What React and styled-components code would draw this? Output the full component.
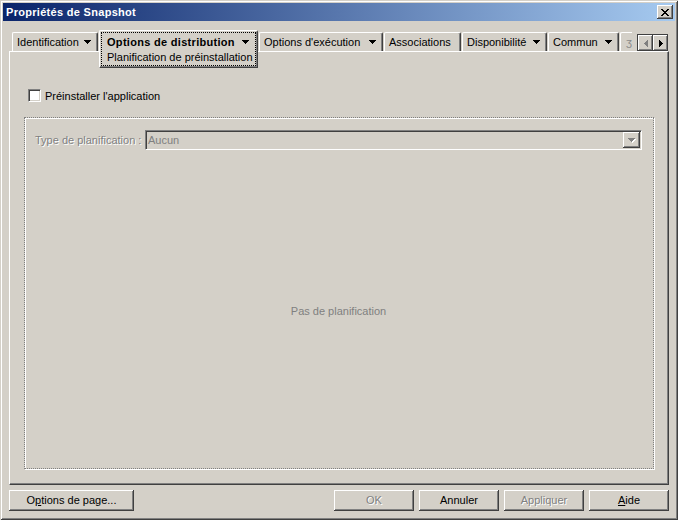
import React from 'react';
import styled, { createGlobalStyle } from 'styled-components';

const Global = createGlobalStyle`
  html, body { margin: 0; padding: 0; background: #d4d0c8; }
  body { font-family: "Liberation Sans", Arial, sans-serif; font-size: 11px; color: #000; }
  #root { width: 678px; height: 520px; }
  * { box-sizing: border-box; }
`;

const Window = styled.div`
  width: 678px;
  height: 520px;
  background: #d4d0c8;
  padding: 3px;
  display: flex;
  flex-direction: column;
  box-shadow: inset 1px 1px 0 #d4d0c8, inset -1px -1px 0 #404040,
    inset 2px 2px 0 #fff, inset -2px -2px 0 #808080;
`;

const TitleBar = styled.div`
  height: 18px;
  flex: none;
  display: flex;
  align-items: center;
  justify-content: space-between;
  padding: 0 2px 0 3px;
  background: linear-gradient(to right, #0a246a, #a6caf0);
`;

const Title = styled.span`
  color: #fff;
  font-weight: bold;
  font-size: 11px;
  letter-spacing: 0.3px;
`;

const CloseButton = styled.div`
  width: 16px;
  height: 14px;
  background: #d4d0c8;
  display: flex;
  align-items: center;
  justify-content: center;
  box-shadow: inset -1px -1px 0 #404040, inset 1px 1px 0 #fff, inset -2px -2px 0 #808080;
`;

const Content = styled.div`
  flex: 1;
  display: flex;
  flex-direction: column;
  padding: 0 6px;
`;

const TabRow = styled.div`
  height: 21px;
  margin-top: 9px;
  padding-left: 3px;
  display: flex;
  align-items: flex-start;
  gap: 1px;
  position: relative;
  z-index: 2;
`;

const Tab = styled.div`
  width: ${p => p.$w}px;
  height: 19px;
  margin-top: 2px;
  flex: none;
  display: flex;
  align-items: center;
  justify-content: space-between;
  padding: 0 6px 1px 4px;
  border-top: 1px solid #fff;
  border-left: 1px solid #fff;
  border-right: 1px solid #404040;
  border-radius: 2px 2px 0 0;
  box-shadow: inset -1px 0 0 #808080;
  white-space: nowrap;
`;

const ActiveTab = styled.div`
  width: ${p => p.$w}px;
  height: 38px;
  flex: none;
  padding: 1px;
  background: #d4d0c8;
  border-top: 1px solid #fff;
  border-left: 1px solid #fff;
  border-right: 1px solid #404040;
  border-bottom: 1px solid #404040;
  border-radius: 2px 2px 0 0;
  box-shadow: inset -1px -1px 0 #808080;
`;

const FocusRect = styled.div`
  height: 34px;
  border: 1px dotted #000;
  display: flex;
  flex-direction: column;
  padding: 1px 6px 0 5px;
`;

const TabLine = styled.div`
  height: 15px;
  display: flex;
  align-items: center;
  justify-content: space-between;
  font-weight: ${p => (p.$bold ? 'bold' : 'normal')};
  letter-spacing: ${p => (p.$bold ? '0.3px' : '0')};
  white-space: nowrap;
`;

const PartialClip = styled.div`
  width: 12px;
  height: 19px;
  margin-top: 2px;
  overflow: hidden;
  flex: none;
`;

const PartialTab = styled.div`
  width: 60px;
  height: 19px;
  border-top: 1px solid #fff;
  border-left: 1px solid #fff;
  border-radius: 2px 2px 0 0;
  padding: 0 0 1px 5px;
  display: flex;
  align-items: center;
  color: #8a8a8a;
`;

const ScrollPair = styled.div`
  margin-left: auto;
  margin-right: 1px;
  margin-top: 4px;
  display: flex;
  border-top: 1px solid #404040;
  border-left: 1px solid #404040;
`;

const ScrollButton = styled.div`
  width: 15px;
  height: 16px;
  display: flex;
  align-items: center;
  justify-content: center;
  background: #d4d0c8;
  box-shadow: inset -1px -1px 0 #404040, inset 1px 1px 0 #fff, inset -2px -2px 0 #808080;
`;

const Panel = styled.div`
  height: 434px;
  flex: none;
  display: flex;
  flex-direction: column;
  border-top: 1px solid #fff;
  border-left: 1px solid #fff;
  border-right: 1px solid #404040;
  border-bottom: 1px solid #404040;
  box-shadow: inset -1px -1px 0 #808080;
`;

const CheckRow = styled.label`
  display: flex;
  align-items: center;
  gap: 4px;
  height: 13px;
  margin: 37px 0 0 18px;
`;

const CheckBox = styled.span`
  width: 13px;
  height: 13px;
  background: #fff;
  border-top: 1px solid #808080;
  border-left: 1px solid #808080;
  border-right: 1px solid #fff;
  border-bottom: 1px solid #fff;
  box-shadow: inset 1px 1px 0 #404040, inset -1px -1px 0 #d4d0c8;
`;

const Group = styled.div`
  width: 630px;
  height: 352px;
  margin: 15px 0 0 14px;
  border: 1px dotted #808080;
  box-shadow: 1px 1px 0 #fff, inset 1px 1px 0 #fff;
  display: flex;
  flex-direction: column;
  padding: 12px 11px 0 10px;
`;

const FieldRow = styled.div`
  display: flex;
  align-items: center;
`;

const Disabled = styled.span`
  color: #808080;
  text-shadow: 1px 1px 0 #fff;
  white-space: nowrap;
`;

const FieldLabel = styled(Disabled)`
  width: 110px;
  flex: none;
`;

const Combo = styled.div`
  flex: 1;
  height: 20px;
  display: flex;
  align-items: center;
  justify-content: space-between;
  padding: 1px;
  border-top: 1px solid #808080;
  border-left: 1px solid #808080;
  border-right: 1px solid #fff;
  border-bottom: 1px solid #fff;
  box-shadow: inset 1px 1px 0 #404040, inset -1px -1px 0 #d4d0c8;
  background: #d4d0c8;
`;

const ComboText = styled(Disabled)`
  padding-left: 1px;
  text-shadow: none;
`;

const ComboButton = styled.div`
  width: 17px;
  height: 16px;
  display: flex;
  align-items: center;
  justify-content: center;
  box-shadow: inset -1px -1px 0 #404040, inset 1px 1px 0 #fff, inset -2px -2px 0 #808080;
`;

const Message = styled.div`
  flex: 1;
  display: flex;
  align-items: center;
  justify-content: center;
  color: #808080;
  padding-top: 3px;
`;

const ButtonRow = styled.div`
  margin-top: 5px;
  display: flex;
  justify-content: space-between;
`;

const ButtonGroup = styled.div`
  display: flex;
  gap: 5px;
`;

const Button = styled.div`
  width: ${p => p.$w || 80}px;
  height: 21px;
  display: flex;
  align-items: center;
  justify-content: center;
  background: #d4d0c8;
  color: ${p => (p.$disabled ? '#808080' : '#000')};
  text-shadow: ${p => (p.$disabled ? '1px 1px 0 #fff' : 'none')};
  box-shadow: inset -1px -1px 0 #404040, inset 1px 1px 0 #fff, inset -2px -2px 0 #808080;
  padding-bottom: 1px;
  white-space: nowrap;
`;

const Arrow = ({ color = '#000' }) => (
  <svg width="7" height="4" viewBox="0 0 7 4" shapeRendering="crispEdges">
    <rect x="0" y="0" width="7" height="1" fill={color} />
    <rect x="1" y="1" width="5" height="1" fill={color} />
    <rect x="2" y="2" width="3" height="1" fill={color} />
    <rect x="3" y="3" width="1" height="1" fill={color} />
  </svg>
);

const DisabledArrow = () => (
  <svg width="8" height="5" viewBox="0 0 8 5" shapeRendering="crispEdges">
    <rect x="1" y="1" width="7" height="1" fill="#fff" />
    <rect x="2" y="2" width="5" height="1" fill="#fff" />
    <rect x="3" y="3" width="3" height="1" fill="#fff" />
    <rect x="4" y="4" width="1" height="1" fill="#fff" />
    <rect x="0" y="0" width="7" height="1" fill="#808080" />
    <rect x="1" y="1" width="5" height="1" fill="#808080" />
    <rect x="2" y="2" width="3" height="1" fill="#808080" />
    <rect x="3" y="3" width="1" height="1" fill="#808080" />
  </svg>
);

const SideArrow = ({ dir, color }) => (
  <svg width="4" height="7" viewBox="0 0 4 7" shapeRendering="crispEdges">
    {dir === 'left' ? (
      <>
        <rect x="3" y="0" width="1" height="7" fill={color} />
        <rect x="2" y="1" width="1" height="5" fill={color} />
        <rect x="1" y="2" width="1" height="3" fill={color} />
        <rect x="0" y="3" width="1" height="1" fill={color} />
      </>
    ) : (
      <>
        <rect x="0" y="0" width="1" height="7" fill={color} />
        <rect x="1" y="1" width="1" height="5" fill={color} />
        <rect x="2" y="2" width="1" height="3" fill={color} />
        <rect x="3" y="3" width="1" height="1" fill={color} />
      </>
    )}
  </svg>
);

const CloseX = () => (
  <svg width="8" height="7" viewBox="0 0 8 7" shapeRendering="crispEdges">
    {[0, 1, 2, 3, 4, 5, 6].map(i => (
      <g key={i}>
        <rect x={i} y={i} width="2" height="1" fill="#000" />
        <rect x={6 - i} y={i} width="2" height="1" fill="#000" />
      </g>
    ))}
  </svg>
);

const tabs = [
  { label: "Options d'exécution", w: 124, arrow: true },
  { label: 'Associations', w: 77, arrow: false },
  { label: 'Disponibilité', w: 85, arrow: true },
  { label: 'Commun', w: 71, arrow: true },
];

export default function App() {
  return (
    <>
      <Global />
      <Window>
        <TitleBar>
          <Title>Propriétés de Snapshot</Title>
          <CloseButton>
            <CloseX />
          </CloseButton>
        </TitleBar>
        <Content>
          <TabRow>
            <Tab $w={86}>
              <span>Identification</span>
              <Arrow />
            </Tab>
            <ActiveTab $w={159}>
              <FocusRect>
                <TabLine $bold>
                  <span>Options de distribution</span>
                  <Arrow />
                </TabLine>
                <TabLine>
                  <span>Planification de préinstallation</span>
                </TabLine>
              </FocusRect>
            </ActiveTab>
            {tabs.map(t => (
              <Tab key={t.label} $w={t.w}>
                <span>{t.label}</span>
                {t.arrow && <Arrow />}
              </Tab>
            ))}
            <PartialClip>
              <PartialTab>ʒ</PartialTab>
            </PartialClip>
            <ScrollPair>
              <ScrollButton>
                <SideArrow dir="left" color="#808080" />
              </ScrollButton>
              <ScrollButton>
                <SideArrow dir="right" color="#000" />
              </ScrollButton>
            </ScrollPair>
          </TabRow>
          <Panel>
            <CheckRow>
              <CheckBox />
              <span>Préinstaller l'application</span>
            </CheckRow>
            <Group>
              <FieldRow>
                <FieldLabel>Type de planification :</FieldLabel>
                <Combo>
                  <ComboText>Aucun</ComboText>
                  <ComboButton>
                    <DisabledArrow />
                  </ComboButton>
                </Combo>
              </FieldRow>
              <Message>Pas de planification</Message>
            </Group>
          </Panel>
          <ButtonRow>
            <Button $w={125}>
              <span>O<u>p</u>tions de page...</span>
            </Button>
            <ButtonGroup>
              <Button $disabled>OK</Button>
              <Button>Annuler</Button>
              <Button $disabled>Appliquer</Button>
              <Button>
                <span><u>A</u>ide</span>
              </Button>
            </ButtonGroup>
          </ButtonRow>
        </Content>
      </Window>
    </>
  );
}
